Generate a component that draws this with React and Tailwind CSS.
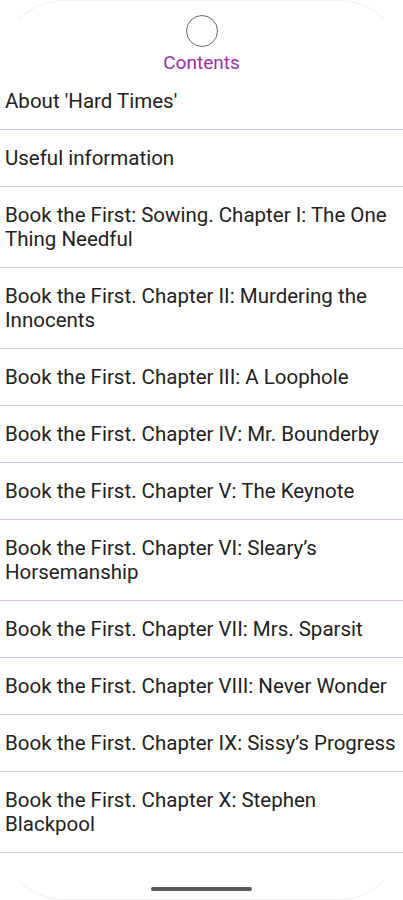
import React from 'react';

const chapters = [
  "About 'Hard Times'",
  'Useful information',
  'Book the First: Sowing. Chapter I: The One Thing Needful',
  'Book the First. Chapter II: Murdering the Innocents',
  'Book the First. Chapter III: A Loophole',
  'Book the First. Chapter IV: Mr. Bounderby',
  'Book the First. Chapter V: The Keynote',
  'Book the First. Chapter VI: Sleary\u2019s Horsemanship',
  'Book the First. Chapter VII: Mrs. Sparsit',
  'Book the First. Chapter VIII: Never Wonder',
  'Book the First. Chapter IX: Sissy\u2019s Progress',
  'Book the First. Chapter X: Stephen Blackpool',
  'Book the First. Chapter XI: No Way Out',
  'Book the First. Chapter XII: The Old Woman',
];

const ChapterRow = ({ title }) => (
  <li className="border-b border-[#d8c2e2] py-4 pl-[5px] pr-1 text-[20.5px] leading-6 text-[#222222]">
    {title}
  </li>
);

const App = () => {
  return (
    <div
      className="relative h-[900px] w-full overflow-hidden bg-white"
      style={{ fontFamily: 'Roboto, "Noto Sans", sans-serif' }}
    >
      <header className="flex flex-col items-center pt-[15px]">
        <div className="h-8 w-8 rounded-full border border-[#6b6b6b]" />
        <span className="mt-[6px] text-[19px] leading-5 text-[#9c2db4]">Contents</span>
      </header>

      <ul className="flex flex-col">
        {chapters.map((title) => (
          <ChapterRow key={title} title={title} />
        ))}
      </ul>

      {/* navigation bar area */}
      <div className="absolute bottom-0 left-0 right-0 flex h-[27px] items-start justify-center bg-white">
        <div className="mt-[14px] h-1 w-[101px] rounded-full bg-[#595959]" />
      </div>
      <div className="pointer-events-none absolute bottom-[27px] left-0 right-0 h-[4px] bg-gradient-to-t from-white to-white/0" />

      {/* device frame edge */}
      <div className="pointer-events-none absolute inset-0 rounded-[64px] border border-[#f0f0f0] border-x-transparent" />
    </div>
  );
};

export default App;
